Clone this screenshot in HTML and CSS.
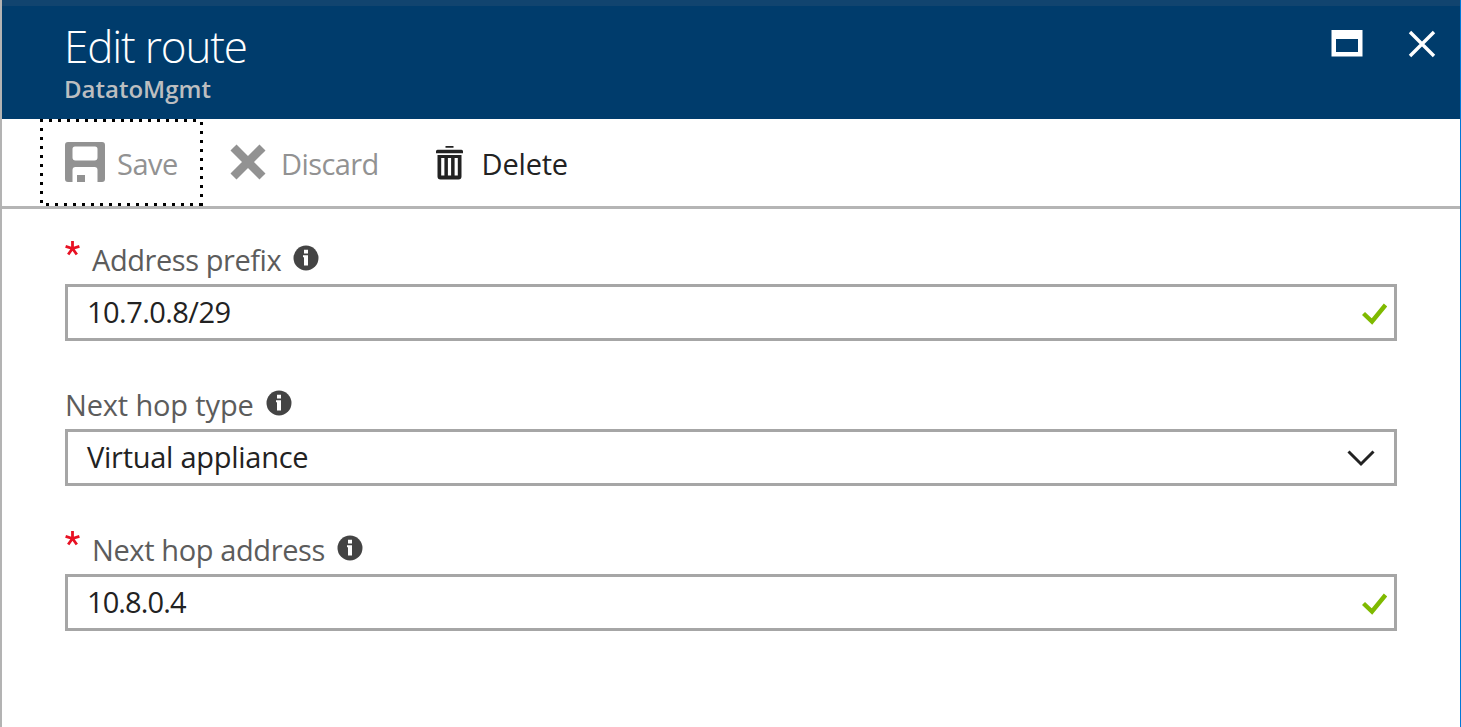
FILE: index.html
```
<!DOCTYPE html>
<html lang="en">
<head>
<meta charset="utf-8">
<title>Edit route</title>
<link rel="stylesheet" href="styles.css">
</head>
<body>
<main class="blade">
  <header class="header">
    <div class="titles">
      <h1 class="title">Edit route</h1>
      <p class="subtitle">DatatoMgmt</p>
    </div>
    <div class="window-actions">
      <svg class="maximize" width="32" height="27" viewBox="0 0 32 27"><path fill="#fff" fill-rule="evenodd" d="M0.500 0h31v26.500H.5zM5 9v13h22V9z"/></svg>
      <svg class="close" width="28" height="28" viewBox="0 0 28 28"><path d="M2 2l24 24M26 2L2 26" stroke="#fff" stroke-width="3.4"/></svg>
    </div>
  </header>
  <nav class="toolbar">
    <div class="command save">
      <svg width="40" height="41" viewBox="0 0 40 41"><path fill="#929292" fill-rule="evenodd" d="M3 0H37Q40 0 40 3V37Q40 40 37 40H32.500V28Q32.500 25 29.500 25H10.500Q7.500 25 7.500 28V40H3Q0 40 0 37V3Q0 0 3 0ZM10 4.500Q7.500 4.500 7.500 7V15.500Q7.500 18.500 10.500 18.500H29.500Q32.500 18.500 32.500 15.500V7Q32.500 4.500 30 4.500ZM12 33H20V40H12Z"/></svg>
      <span class="label-save">Save</span>
    </div>
    <div class="command discard">
      <svg width="36" height="36" viewBox="0 0 36 36"><path d="M3.500 3.500l29 29M32.500 3.500l-29 29" stroke="#929292" stroke-width="8.500"/></svg>
      <span class="label-discard">Discard</span>
    </div>
    <div class="command delete">
      <svg width="27" height="34" viewBox="0 0 27 34"><path fill="#222" fill-rule="evenodd" d="M9.500 0h8v1.700h-8zM1.500 3.700h24q1.500 0 1.500 1.500v2H0v-2q0-1.500 1.500-1.500zM1.500 9h24v21.500q0 3-3 3h-18q-3 0-3-3zM5.200 12v17.500h3.200V12zM11.900 12v17.500h3.200V12zM18.600 12v17.500h3.200V12z"/></svg>
      <span class="label-delete">Delete</span>
    </div>
  </nav>
  <form class="form">
    <div class="field">
      <div class="caption required"><svg class="star" width="15" height="15" viewBox="0 0 15 15"><path d="M7.500 7.500V0M7.500 7.500L.6 5.300M7.500 7.500l6.900-2.200M7.500 7.500l-4.300 6M7.500 7.500l4.300 6"/></svg>
        <span class="name prefix">Address prefix</span>
        <svg class="info" width="26" height="26" viewBox="0 0 26 26"><circle cx="13" cy="13" r="12.500"/><path d="M11 4.800h4v3.600h-4zM10 10.200h5v10.300h-4v-8.300h-1z"/></svg>
      </div>
      <div class="box"><span class="value v-prefix">10.7.0.8/29</span><svg class="check" width="25" height="22" viewBox="0 0 25 22"><path d="M1.500 10.500l8.500 8L23.500 2"/></svg></div>
    </div>
    <div class="field">
      <div class="caption">
        <span class="name type">Next hop type</span>
        <svg class="info" width="26" height="26" viewBox="0 0 26 26"><circle cx="13" cy="13" r="12.500"/><path d="M11 4.800h4v3.600h-4zM10 10.200h5v10.300h-4v-8.300h-1z"/></svg>
      </div>
      <div class="box"><span class="value v-type">Virtual appliance</span><svg class="chevron" width="28" height="17" viewBox="0 0 28 17"><path d="M1.500 1.500L14 14 26.500 1.500"/></svg></div>
    </div>
    <div class="field">
      <div class="caption required"><svg class="star" width="15" height="15" viewBox="0 0 15 15"><path d="M7.500 7.500V0M7.500 7.500L.6 5.300M7.500 7.500l6.900-2.200M7.500 7.500l-4.300 6M7.500 7.500l4.300 6"/></svg>
        <span class="name address">Next hop address</span>
        <svg class="info" width="26" height="26" viewBox="0 0 26 26"><circle cx="13" cy="13" r="12.500"/><path d="M11 4.800h4v3.600h-4zM10 10.200h5v10.300h-4v-8.300h-1z"/></svg>
      </div>
      <div class="box"><span class="value v-address">10.8.0.4</span><svg class="check" width="25" height="22" viewBox="0 0 25 22"><path d="M1.500 10.500l8.500 8L23.500 2"/></svg></div>
    </div>
  </form>
</main>
</body>
</html>
```
FILE: styles.css
```
* { box-sizing: border-box; }
body { margin: 0; font-family: "Open Sans", "Noto Sans", sans-serif; background: #fff; }
svg { display: block; flex: none; }
.blade { width: 1461px; height: 727px; overflow: hidden; border-left: 2px solid #b3b3b3; border-right: 1px solid #0078d7; }
.header {
  height: 119px; margin-left: -2px; padding: 0 24px 0 62px;
  background: #003c6c; border-top: 6px solid #11446f; border-left: 2px solid #164b78;
  display: flex; justify-content: space-between;
}
.title { margin: 16px 0 0; font-size: 44px; line-height: 48px; font-weight: 300; color: #fff; white-space: nowrap; letter-spacing: -1.15px; }
.subtitle { margin: 6px 0 0; font-size: 24px; line-height: 26px; font-weight: 600; color: #bcbec0; }
.window-actions { display: flex; gap: 45px; padding-top: 24px; }
.toolbar { height: 90px; border-bottom: 3px solid #b5b5b5; display: flex; align-items: flex-start; }
.command { display: flex; white-space: nowrap; font-size: 29px; line-height: 40px; color: #929292; }
.save {
  --x: repeating-linear-gradient(90deg, #000 0 3px, transparent 3px 9px);
  --y: repeating-linear-gradient(#000 0 3px, transparent 3px 9px);
  width: 163px; height: 87px; margin-left: 38px; padding: 23px 0 0 25px; gap: 12px;
  background:
    var(--x) 0 0 / 157px 3px no-repeat,
    var(--x) 6px 84px / 157px 3px no-repeat,
    var(--y) 0 0 / 3px 84px no-repeat,
    var(--y) 160px 3px / 3px 84px no-repeat;
}
.label-save { margin-top: 2px; letter-spacing: -.5px; }
.discard { margin-left: 27px; padding-top: 25px; gap: 15px; letter-spacing: -.6px; }
.delete { margin-left: 57px; padding-top: 27px; gap: 19px; color: #222; letter-spacing: -.2px; }
.label-discard { margin-top: 0; }
.label-delete { margin-top: -2px; }
.form { padding: 30px 63px 0; }
.field { height: 145px; }
.caption { height: 45px; display: flex; align-items: flex-start; font-size: 29px; line-height: 42px; color: #5c5c5c; white-space: nowrap; }
.star { margin: 2px 12px 0 0; fill: none; stroke: #e81123; stroke-width: 2.8; }
.info { margin: 6px 0 0 12px; fill: #444; }
.info path { fill: #fff; }
.prefix { letter-spacing: -.43px; }
.type { letter-spacing: -.15px; }
.address { letter-spacing: -.38px; }
.v-prefix { letter-spacing: -.55px; margin-left: -1px; }
.v-type { letter-spacing: -.27px; margin-left: -1px; }
.v-address { letter-spacing: -.9px; margin-left: -1px; }
.box { height: 57px; border: 3px solid #a6a6a6; display: flex; justify-content: space-between; align-items: center; padding: 0 7px 0 20px; }
.value { font-size: 29px; line-height: 42px; margin-top: -2px; color: #222; white-space: nowrap; }
.check { fill: none; stroke: #7fba00; stroke-width: 4.4; margin-top: 3px; }
.chevron { fill: none; stroke: #222; stroke-width: 3; margin: 2px 12px 0 0; }
```
